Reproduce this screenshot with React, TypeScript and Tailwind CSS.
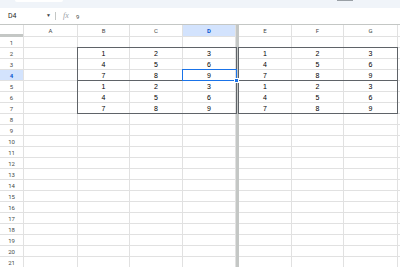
import React from "react";

const colW = [54, 52, 53, 53];
const colW2 = [53, 52, 54, 40];
const leftLetters = ["A", "B", "C", "D"];
const rightLetters = ["E", "F", "G", ""];

const data: Record<number, string[]> = {
  2: ["1", "2", "3"],
  3: ["4", "5", "6"],
  4: ["7", "8", "9"],
  5: ["1", "2", "3"],
  6: ["4", "5", "6"],
  7: ["7", "8", "9"],
};

function Row({ n }: { n: number }) {
  const vals = data[n];
  const sel = n === 4;
  return (
    <div className="flex h-[11px]">
      <div
        className={`w-[24px] shrink-0 border-r border-b border-[#e1e1e1] flex items-center justify-center text-[6px] ${sel ? "bg-[#d3e3fd] text-[#0b57d0] font-bold" : "text-[#444746]"}`}
        style={{ fontFamily: "Roboto, 'Liberation Sans', sans-serif" }}
      >
        {n}
      </div>
      {colW.map((w, i) => (
        <div
          key={i}
          className="shrink-0 border-r border-b border-[#e1e1e1] flex items-center justify-center text-[7px] text-black leading-none"
          style={{ width: w }}
        >
          {vals && i > 0 ? vals[i - 1] : ""}
        </div>
      ))}
      <div className="w-[3px] shrink-0 bg-[#c4c7c5]" />
      {colW2.map((w, i) => (
        <div
          key={i}
          className="shrink-0 border-r border-b border-[#e1e1e1] flex items-center justify-center text-[7px] text-black leading-none"
          style={{ width: w }}
        >
          {vals && i < 3 ? vals[i] : ""}
        </div>
      ))}
    </div>
  );
}

export default function App() {
  const rows = Array.from({ length: 21 }, (_, i) => i + 1);
  return (
    <div
      className="w-[400px] h-[267px] overflow-hidden bg-white relative"
      style={{ fontFamily: "'Liberation Sans', Arial, sans-serif" }}
    >
      {/* toolbar bottom */}
      <div className="h-[8px] bg-[#f0f4f9] relative">
        <div className="absolute left-[15px] top-0 w-[48px] h-[2px] bg-white rounded-b-[3px]" />
        <div className="absolute left-[337px] top-0 w-[16px] h-[1px] bg-[#9aa0a6]" />
      </div>
      {/* formula bar */}
      <div className="h-[16px] flex items-center text-[#1f1f1f]" style={{ fontFamily: "Roboto, 'Liberation Sans', sans-serif" }}>
        <div className="w-[8px]" />
        <div className="w-[38px] text-[7px]">D4</div>
        <div className="text-[5px] text-[#444746] w-[9px]">▼</div>
        <div className="w-px h-[8px] bg-[#c4c7c5]" />
        <div className="w-[7px]" />
        <div className="text-[8px] italic text-[#9aa0a6] w-[13px]" style={{ fontFamily: "'Liberation Serif', serif" }}>fx</div>
        <div className="text-[6px] text-[#444746]">9</div>
      </div>
      {/* grid */}
      <div className="relative border-t border-[#c4c7c5]">
        {/* column header */}
        <div className="flex h-[12px] text-[6px] text-[#444746]" style={{ fontFamily: "Roboto, 'Liberation Sans', sans-serif" }}>
          <div className="w-[24px] shrink-0 border-r border-[#e1e1e1] flex flex-col">
            <div className="flex-1" />
            <div className="h-[3px] bg-[#c4c7c5]" />
          </div>
          {colW.map((w, i) => (
            <div
              key={i}
              className={`shrink-0 border-r border-b border-[#e1e1e1] flex items-center justify-center ${i === 3 ? "bg-[#d3e3fd] text-[#0b57d0] font-bold" : ""}`}
              style={{ width: w }}
            >
              {leftLetters[i]}
            </div>
          ))}
          <div className="w-[3px] shrink-0 bg-[#c4c7c5]" />
          {colW2.map((w, i) => (
            <div
              key={i}
              className="shrink-0 border-r border-b border-[#e1e1e1] flex items-center justify-center"
              style={{ width: w }}
            >
              {rightLetters[i]}
            </div>
          ))}
        </div>
        {rows.map((n) => (
          <Row key={n} n={n} />
        ))}
        {/* range borders */}
        <div className="absolute left-[77px] top-[22px] w-[160px] h-[67px] border border-[#5f6368]" />
        <div className="absolute left-[77px] top-[55px] w-[160px] h-px bg-[#5f6368]" />
        <div className="absolute left-[238px] top-[22px] w-[160px] h-[67px] border border-[#5f6368]" />
        <div className="absolute left-[238px] top-[55px] w-[160px] h-px bg-[#5f6368]" />
        {/* selection */}
        <div className="absolute left-[182px] top-[44px] w-[55px] h-[12px] border border-[#1a73e8]" />
        <div className="absolute left-[234px] top-[53px] w-[5px] h-[5px] bg-[#1a73e8] border border-white" />
      </div>
    </div>
  );
}
